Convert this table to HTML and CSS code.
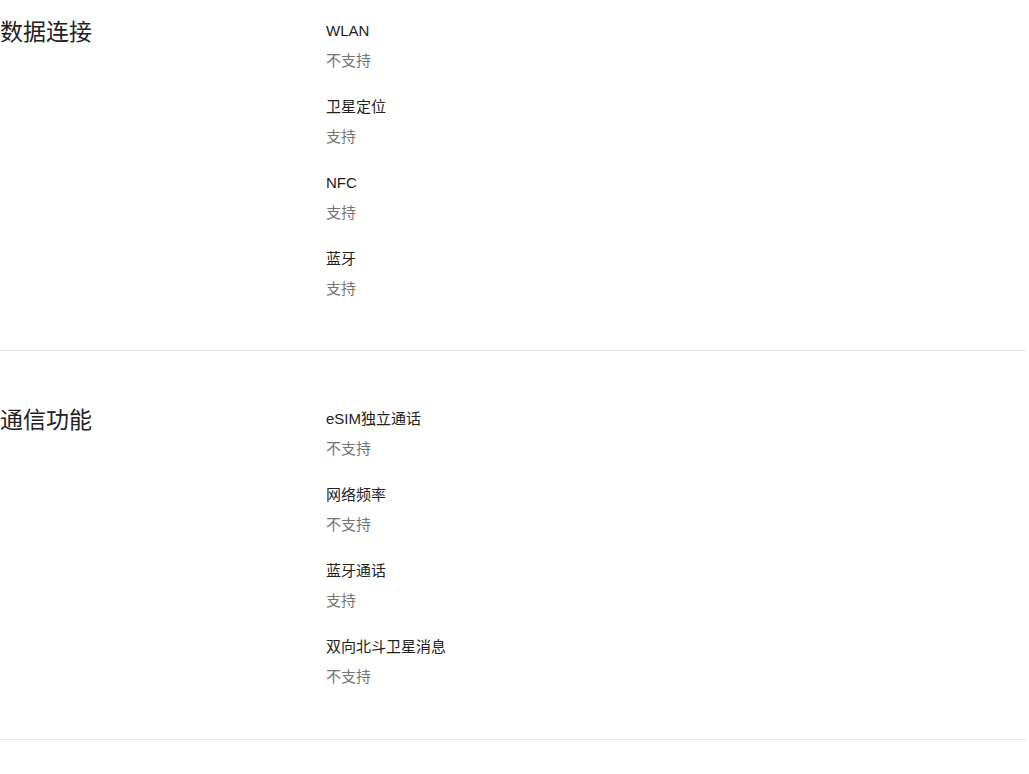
FILE: index.html
```html
<!DOCTYPE html>
<html lang="zh-CN">
<head>
    <meta charset="UTF-8">
    <meta name="viewport" content="width=device-width, initial-scale=1.0">
    <title>规格参数</title>
    <link rel="stylesheet" href="styles.css">
</head>
<body>
    <div class="specs">
        <div class="spec-group first">
            <h2 class="group-title">数据连接</h2>
            <ul class="group-items">
                <li><p class="item-name">WLAN</p><p class="item-value">不支持</p></li>
                <li><p class="item-name">卫星定位</p><p class="item-value">支持</p></li>
                <li><p class="item-name">NFC</p><p class="item-value">支持</p></li>
                <li><p class="item-name">蓝牙</p><p class="item-value">支持</p></li>
            </ul>
        </div>
        <div class="spec-group">
            <h2 class="group-title">通信功能</h2>
            <ul class="group-items">
                <li><p class="item-name">eSIM独立通话</p><p class="item-value">不支持</p></li>
                <li><p class="item-name">网络频率</p><p class="item-value">不支持</p></li>
                <li><p class="item-name">蓝牙通话</p><p class="item-value">支持</p></li>
                <li><p class="item-name">双向北斗卫星消息</p><p class="item-value">不支持</p></li>
            </ul>
        </div>
    </div>
</body>
</html>
```

FILE: styles.css
```css
*{
    margin: 0;
    padding: 0;
}
ul{
    list-style: none;
}

html,body{
    background-color: #fff;
}
body{
    font-family: "Liberation Sans", Arial, "Noto Sans CJK SC", sans-serif;
    color: #333;
}

.specs{
    width: 1026px;
}
.spec-group{
    display: flex;
    padding: 56px 0 50px;
    border-bottom: 1px solid #e8e8e8;
}
/* 页面已向下滚动一段，第一组只露出一部分上边距 */
.spec-group.first{
    padding-top: 19px;
    padding-bottom: 49px;
}

.group-title{
    width: 326px;
    font-size: 23px;
    font-weight: 400;
    line-height: 26px;
    color: #222;
}

.group-items{
    display: flex;
    flex-direction: column;
    gap: 22px;
}
.item-name{
    font-size: 15px;
    line-height: 24px;
    color: #222;
}
.item-value{
    margin-top: 6px;
    font-size: 15px;
    line-height: 24px;
    color: #757575;
}
```
